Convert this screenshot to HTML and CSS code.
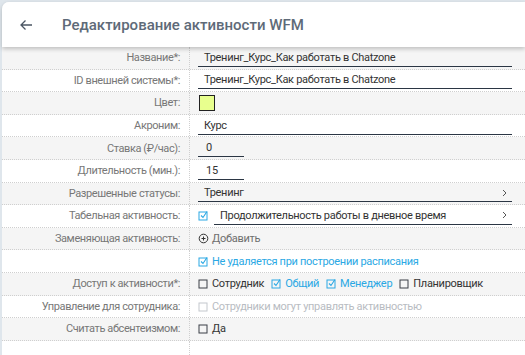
FILE: index.html
```html
<!DOCTYPE html>
<html lang="ru">
<head>
    <meta charset="UTF-8">
    <meta name="viewport" content="width=device-width, initial-scale=1.0">
    <link rel="stylesheet" href="styles.css">
    <title>Редактирование активности WFM</title>
</head>
<body>
    <div class="panel">
        <div class="bar">
            <svg class="back" width="14" height="12" viewBox="0 0 14 12">
                <path d="M13 6H2M6.5 1.5L2 6l4.5 4.5" fill="none" stroke="#4b5663" stroke-width="1.3"/>
            </svg>
            <h2>Редактирование активности WFM</h2>
        </div>

        <div class="form">
            <div class="row">
                <div class="label">Название*:</div>
                <div class="value"><div class="field">Тренинг_Курс_Как работать в Chatzone</div></div>
            </div>
            <div class="row">
                <div class="label">ID внешней системы*:</div>
                <div class="value"><div class="field">Тренинг_Курс_Как работать в Chatzone</div></div>
            </div>
            <div class="row">
                <div class="label">Цвет:</div>
                <div class="value"><div class="swatch"></div></div>
            </div>
            <div class="row">
                <div class="label">Акроним:</div>
                <div class="value"><div class="field">Курс</div></div>
            </div>
            <div class="row">
                <div class="label">Ставка (₽/час):</div>
                <div class="value"><div class="field short">0</div></div>
            </div>
            <div class="row">
                <div class="label">Длительность (мин.):</div>
                <div class="value"><div class="field short">15</div></div>
            </div>
            <div class="row">
                <div class="label">Разрешенные статусы:</div>
                <div class="value">
                    <div class="field select">
                        <span>Тренинг</span>
                        <svg class="chev" width="5" height="8" viewBox="0 0 5 8"><path d="M1 1l3 3-3 3" fill="none" stroke="#555" stroke-width="1"/></svg>
                    </div>
                </div>
            </div>
            <div class="row">
                <div class="label">Табельная активность:</div>
                <div class="value">
                    <svg class="cb" width="11" height="11" viewBox="0 0 11 11"><rect x="1" y="2" width="8" height="8" fill="none" stroke="#2aa8e4"/><path d="M3 5.5l2 2 4-6" fill="none" stroke="#2aa8e4" stroke-width="1.1"/></svg>
                    <div class="field select grow">
                        <span>Продолжительность работы в дневное время</span>
                        <svg class="chev" width="5" height="8" viewBox="0 0 5 8"><path d="M1 1l3 3-3 3" fill="none" stroke="#555" stroke-width="1"/></svg>
                    </div>
                </div>
            </div>
            <div class="row">
                <div class="label">Заменяющая активность:</div>
                <div class="value add">
                    <svg class="cb" width="11" height="11" viewBox="0 0 11 11"><circle cx="5.5" cy="5.5" r="4.3" fill="none" stroke="#333"/><path d="M5.5 3.5v4M3.5 5.5h4" stroke="#333" stroke-width="1"/></svg>
                    <span>Добавить</span>
                </div>
            </div>
            <div class="row">
                <div class="label"></div>
                <div class="value checked">
                    <svg class="cb" width="11" height="11" viewBox="0 0 11 11"><rect x="1" y="2" width="8" height="8" fill="none" stroke="#2aa8e4"/><path d="M3 5.5l2 2 4-6" fill="none" stroke="#2aa8e4" stroke-width="1.1"/></svg>
                    <span>Не удаляется при построении расписания</span>
                </div>
            </div>
            <div class="row">
                <div class="label">Доступ к активности*:</div>
                <div class="value">
                    <span class="opt">
                        <svg class="cb" width="11" height="11" viewBox="0 0 11 11"><rect x="1" y="2" width="8" height="8" fill="none" stroke="#3a3f47"/></svg>Сотрудник
                    </span>
                    <span class="opt checked">
                        <svg class="cb" width="11" height="11" viewBox="0 0 11 11"><rect x="1" y="2" width="8" height="8" fill="none" stroke="#2aa8e4"/><path d="M3 5.5l2 2 4-6" fill="none" stroke="#2aa8e4" stroke-width="1.1"/></svg>Общий
                    </span>
                    <span class="opt checked">
                        <svg class="cb" width="11" height="11" viewBox="0 0 11 11"><rect x="1" y="2" width="8" height="8" fill="none" stroke="#2aa8e4"/><path d="M3 5.5l2 2 4-6" fill="none" stroke="#2aa8e4" stroke-width="1.1"/></svg>Менеджер
                    </span>
                    <span class="opt">
                        <svg class="cb" width="11" height="11" viewBox="0 0 11 11"><rect x="1" y="2" width="8" height="8" fill="none" stroke="#3a3f47"/></svg>Планировщик
                    </span>
                </div>
            </div>
            <div class="row">
                <div class="label">Управление для сотрудника:</div>
                <div class="value disabled">
                    <svg class="cb" width="11" height="11" viewBox="0 0 11 11"><rect x="1" y="2" width="8" height="8" fill="none" stroke="#c4c8cd"/></svg>
                    <span>Сотрудники могут управлять активностью</span>
                </div>
            </div>
            <div class="row">
                <div class="label">Считать абсентеизмом:</div>
                <div class="value">
                    <svg class="cb" width="11" height="11" viewBox="0 0 11 11"><rect x="1" y="2" width="8" height="8" fill="none" stroke="#3a3f47"/></svg>
                    <span>Да</span>
                </div>
            </div>
            <div class="row last">
                <div class="label"></div>
                <div class="value"></div>
            </div>
        </div>
    </div>
</body>
</html>
```

FILE: styles.css
```css
body {
    margin: 0;
    padding: 2px 0 0 2px;
    background-color: #dfe6ec;
    font-family: 'Roboto', 'Liberation Sans', sans-serif;
    font-size: 11px;
    letter-spacing: -0.3px;
    color: #333;
    height: 355px;
    overflow: hidden;
    box-sizing: border-box;
}

.panel {
    background-color: #fff;
    border-top-left-radius: 7px;
    height: 100%;
}

.bar {
    height: 45px;
    display: flex;
    align-items: center;
    padding-left: 17px;
    position: relative;
    z-index: 1;
    background-color: #fff;
    border-top-left-radius: 7px;
    box-shadow: 0 2px 4px rgba(0, 0, 0, 0.22);
}

.back {
    margin-right: 29px;
}

h2 {
    margin: 0;
    font-size: 15px;
    font-weight: 500;
    letter-spacing: 0;
    color: #5e6a78;
}

.row {
    display: grid;
    grid-template-columns: 188px 1fr;
    height: 22.6px;
    border-bottom: 1px dotted #cfcfcf;
    box-sizing: border-box;
}

.row:nth-child(odd) {
    background-color: #f5f5f5;
}

.row.last {
    height: 30px;
    border-bottom: none;
}

.label {
    padding-right: 9px;
    color: #777;
    letter-spacing: -0.4px;
    border-right: 1px dotted #cfcfcf;
    display: flex;
    align-items: center;
    justify-content: flex-end;
}

.value {
    display: flex;
    align-items: center;
    padding: 0 13px 0 8px;
}

.field {
    flex: 1;
    border-bottom: 1px solid #2b3644;
    padding: 0 0 1px 6px;
    line-height: 15px;
    margin-top: 1px;
}

.field.short {
    flex: none;
    width: 38px;
    padding-left: 8px;
}

.field.select {
    display: flex;
    align-items: center;
    justify-content: space-between;
    padding-right: 5px;
}

.field.grow {
    margin-left: 2px;
}

.swatch {
    width: 14px;
    height: 14px;
    margin-left: 1px;
    background-color: #e8ff8e;
    border: 1px solid #222;
}

.cb {
    flex: none;
    margin-right: 3px;
}

.add {
    color: #6e6e6e;
}

.checked {
    color: #2aa8e4;
}

.opt {
    display: inline-flex;
    align-items: center;
    margin-right: 7px;
}

.disabled {
    color: #b8bcc2;
}
```
